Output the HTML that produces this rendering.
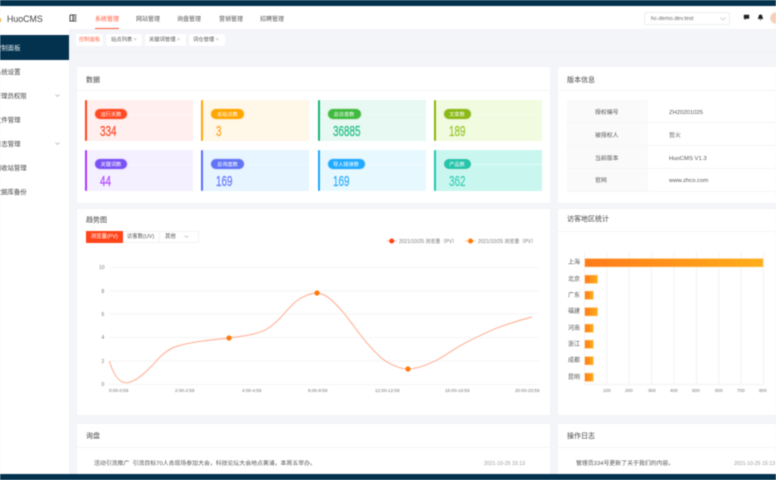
<!DOCTYPE html>
<html lang="zh">
<head>
<meta charset="utf-8">
<title>HuoCMS</title>
<style>
*{margin:0;padding:0;box-sizing:border-box}
html,body{width:776px;height:480px;overflow:hidden;background:#f4f5f9}
body{font-family:"Liberation Sans","Noto Sans CJK SC",sans-serif;position:relative}
#w{position:absolute;left:0;top:0;width:776px;height:480px;overflow:hidden;filter:blur(.4px)}
.a{position:absolute}
.t{position:absolute;white-space:nowrap;line-height:10px;height:10px;margin-top:1.5px}
.card{position:absolute;background:#fff;border-radius:2px}
.hr{position:absolute;height:1px;background:#f5f5f7}
.title{font-size:7px;color:#444}
.side{font-size:6.4px;color:#444;margin-top:2px}
.nav{font-size:6px;color:#555}
.tab{position:absolute;top:34px;height:12px;background:#fff;border-radius:2px;font-size:5.3px;line-height:13.5px;color:#555;white-space:nowrap;padding-left:6px}
.tile{position:absolute;width:108px;height:41px}
.tile i{position:absolute;left:0;top:0;width:2px;height:100%;border-radius:1px}
.tile u{position:absolute;left:10px;right:0;top:14px;height:1px;background:rgba(255,255,255,.45)}
.pill{position:absolute;top:8px;left:9px;height:11.5px;border-radius:6px;color:#fff;font-size:5.2px;line-height:12.5px;text-align:center;border:.5px solid rgba(255,255,255,.8);white-space:nowrap}
.num{position:absolute;left:15px;top:21.5px;font-size:15px;line-height:19px;transform:scaleX(.66);transform-origin:left center;white-space:nowrap;-webkit-text-stroke:.3px currentColor}
.cell{position:absolute;font-size:5.9px;color:#555;line-height:10px;white-space:nowrap;margin-top:1.5px}
.ax{font-size:4.6px;color:#777}
</style>
</head>
<body>
<div id="w">
  <!-- header -->
  <div class="a" style="left:0;top:5px;width:776px;height:24px;background:#fff"></div>
  <div class="a" style="left:0;top:0;width:776px;height:5.5px;background:#03324f"></div>
  <div class="a" style="left:0;top:18px;width:1.3px;height:3.5px;background:#f5a623"></div>
  <div class="t" style="left:7px;top:13px;font-size:8.8px;color:#444;margin-top:.5px">HuoCMS</div>
  <svg class="a" style="left:69px;top:14px" width="9" height="8" viewBox="0 0 9 8"><path d="M1 1H7.5M1 1V7H7.5M4 1V7M5 3H7.5M5 5H7.5" fill="none" stroke="#444" stroke-width="1"/></svg>
  <div class="t nav" style="left:95px;top:13px;color:#ff5a3c">系统管理</div>
  <div class="a" style="left:95px;top:28px;width:24px;height:1px;background:#ff5a3c"></div>
  <div class="t nav" style="left:136px;top:13px">网站管理</div>
  <div class="t nav" style="left:177px;top:13px">询盘管理</div>
  <div class="t nav" style="left:219px;top:13px">营销管理</div>
  <div class="t nav" style="left:260px;top:13px">招聘管理</div>
  <div class="a" style="left:644px;top:12px;width:86px;height:13px;border:1px solid #eceef2;border-radius:2px;background:#fff"></div>
  <div class="t" style="left:651px;top:13px;font-size:5.6px;color:#666;margin-top:.5px">hc-demo.dev.test</div>
  <svg class="a" style="left:720px;top:17px" width="6" height="4" viewBox="0 0 6 4"><path d="M.5 .5L3 3L5.5 .5" fill="none" stroke="#bbb" stroke-width=".6"/></svg>
  <svg class="a" style="left:743px;top:14px" width="7" height="7" viewBox="0 0 7 7"><path d="M.8 .8H6.2V4.8H3L1.8 6V4.8H.8Z" fill="#222"/></svg>
  <svg class="a" style="left:757px;top:14px" width="7" height="7" viewBox="0 0 7 7"><path d="M3.5 .5C5 .5 5.5 2 5.5 3.2L6.3 5H.7L1.5 3.2C1.5 2 2 .5 3.5 .5ZM2.7 5.6H4.3L3.5 6.6Z" fill="#222"/></svg>
  <div class="a" style="left:770px;top:12px;width:12px;height:12px;border-radius:50%;background:#f8cdb8;border:1px solid #f1dfd6"></div>

  <!-- sidebar -->
  <div class="a" style="left:0;top:29px;width:68.5px;height:446px;background:#fff"></div>
  <div class="a" style="left:0;top:35px;width:68.5px;height:25px;background:#03324f"></div>
  <div class="t side" style="left:-5px;top:41.5px;color:#e8eef2">控制面板</div>
  <div class="t side" style="left:-5px;top:65.5px">系统设置</div>
  <div class="t side" style="left:-5.3px;top:89.5px">管理员权限</div>
  <div class="t side" style="left:-5px;top:113.5px">文件管理</div>
  <div class="t side" style="left:-5px;top:137.5px">日志管理</div>
  <div class="t side" style="left:-5.3px;top:161.5px">回收站管理</div>
  <div class="t side" style="left:-5.3px;top:185.5px">数据库备份</div>
  <svg class="a" style="left:55px;top:94px" width="5" height="3" viewBox="0 0 5 3"><path d="M.5 .5L2.5 2.4L4.5 .5" fill="none" stroke="#aaa" stroke-width=".6"/></svg>
  <svg class="a" style="left:55px;top:142px" width="5" height="3" viewBox="0 0 5 3"><path d="M.5 .5L2.5 2.4L4.5 .5" fill="none" stroke="#aaa" stroke-width=".6"/></svg>

  <!-- tabs -->
  <div class="tab" style="left:76px;width:27px;padding-left:3px;color:#ff6a4d">控制面板</div>
  <div class="tab" style="left:106px;width:36px;padding-left:5px">站点列表 <span style="color:#aaa">×</span></div>
  <div class="tab" style="left:145px;width:41px;padding-left:4px">关键词管理 <span style="color:#aaa">×</span></div>
  <div class="tab" style="left:189px;width:36px;padding-left:4px">词仓管理 <span style="color:#aaa">×</span></div>
  <div class="hr" style="left:69px;top:52px;width:707px;background:#f0f1f5"></div>

  <!-- data card -->
  <div class="card" style="left:77px;top:67px;width:473px;height:136px"></div>
  <div class="t title" style="left:86px;top:74px">数据</div>
  <div class="hr" style="left:77px;top:90px;width:473px"></div>

  <div class="tile" style="left:85px;top:100px;background:#fff0ef"><i style="background:#ff4419"></i><u></u><div class="pill" style="width:34px;background:#ff4a24">运行天数</div><div class="num" style="color:#ff5230">334</div></div>
  <div class="tile" style="left:201px;top:100px;background:#fff7e8"><i style="background:#ffa30f"></i><u></u><div class="pill" style="width:35px;background:#ffa600">总站点数</div><div class="num" style="color:#ffa820">3</div></div>
  <div class="tile" style="left:317.5px;top:100px;background:#e8f8f2"><i style="background:#16b777"></i><u></u><div class="pill" style="width:35px;background:#3fb93f">总访患数</div><div class="num" style="color:#2cc08a">36885</div></div>
  <div class="tile" style="left:433.5px;top:100px;background:#f1fbe0"><i style="background:#8ab808"></i><u></u><div class="pill" style="width:29px;background:#8ab916">文章数</div><div class="num" style="color:#9cc832">189</div></div>

  <div class="tile" style="left:85px;top:150px;background:#f5f0ff"><i style="background:#a838ff"></i><u></u><div class="pill" style="width:34px;background:#7a52f4">关键词数</div><div class="num" style="color:#b04dff">44</div></div>
  <div class="tile" style="left:201px;top:150px;background:#e6f5ff"><i style="background:#5b6cff"></i><u></u><div class="pill" style="width:35px;background:#6174f5">总询盘数</div><div class="num" style="color:#6a78ff">169</div></div>
  <div class="tile" style="left:317.5px;top:150px;background:#e8f8ff"><i style="background:#1aa7ff"></i><u></u><div class="pill" style="width:39px;background:#22aaff">导入链接数</div><div class="num" style="color:#30b0ff">169</div></div>
  <div class="tile" style="left:433.5px;top:150px;background:#c9f7f0"><i style="background:#20c7b0"></i><u></u><div class="pill" style="width:29px;background:#26c4ab">产品数</div><div class="num" style="color:#40d0b8">362</div></div>

  <!-- version card -->
  <div class="card" style="left:558px;top:67px;width:230px;height:136px"></div>
  <div class="t title" style="left:567px;top:74px">版本信息</div>
  <div class="hr" style="left:558px;top:90px;width:218px"></div>
  <div class="a" style="left:567px;top:100px;width:81px;height:91px;background:#fafafa"></div>
  <div class="hr" style="left:567px;top:122px;width:209px"></div>
  <div class="hr" style="left:567px;top:145px;width:209px"></div>
  <div class="hr" style="left:567px;top:168px;width:209px"></div>
  <div class="hr" style="left:567px;top:191px;width:209px"></div>
  <div class="cell" style="left:595px;top:106px">授权编号</div>
  <div class="cell" style="left:669px;top:106px">ZH20201025</div>
  <div class="cell" style="left:595px;top:129px">被授权人</div>
  <div class="cell" style="left:669px;top:129px">哲火</div>
  <div class="cell" style="left:595px;top:152px">当前版本</div>
  <div class="cell" style="left:669px;top:152px">HuoCMS V1.3</div>
  <div class="cell" style="left:595px;top:174px">官网</div>
  <div class="cell" style="left:669px;top:174px">www.zhco.com</div>

  <!-- trend card -->
  <div class="card" style="left:77px;top:209px;width:473px;height:206px"></div>
  <div class="t title" style="left:86px;top:214.5px">趋势图</div>
  <div class="a" style="left:86px;top:231px;width:113px;height:12px;border:1px solid #f2f3f5"></div>
  <div class="a" style="left:86px;top:231px;width:36.5px;height:12px;background:#ff4419;color:#fff;font-size:5.4px;line-height:13px;text-align:center;white-space:nowrap">浏览量(PV)</div>
  <div class="a" style="left:122.5px;top:231px;width:37px;height:12px;color:#555;font-size:5.4px;line-height:13px;text-align:center;border-right:1px solid #f2f3f5;white-space:nowrap">访客数(UV)</div>
  <div class="a" style="left:165px;top:231px;height:12px;color:#555;font-size:5.4px;line-height:13px;white-space:nowrap">其他</div>
  <svg class="a" style="left:184px;top:235px" width="5" height="3" viewBox="0 0 5 3"><path d="M.5 .5L2.5 2.4L4.5 .5" fill="none" stroke="#bbb" stroke-width=".6"/></svg>

  <svg class="a" style="left:77px;top:209px" width="473" height="206" viewBox="77 209 473 206">
    <g stroke="#f5f5f7" stroke-width="1">
      <path d="M109 267.5H539M109 291H539M109 314H539M109 337.5H539M109 361H539M109 384.5H539"/>
    </g>
    <path d="M109.3 361C113 373 118 382.7 126 382.7C137 382.7 150 368 159 358C166 351 171 348 176 346.5C192 341.5 212 340 229 338C243 336 253 335 263 331C272 327 278 320 283 315C290 307 296 300 303 297C308 294.5 312 293 317 293C326 293 335 303 343 312C352 323 359 334 367 343C373 350 380 358 387 362C394 366 401 369 408 369C417 369 428 364.5 437 360C448 354 456 347.5 467 342C477 337 487 332 497 328C509 323.5 520 320 532 317" fill="none" stroke="#ffb79e" stroke-width="1.2"/>
    <circle cx="229" cy="338" r="2.6" fill="#ff7a0a"/>
    <circle cx="317" cy="293" r="2.6" fill="#ff7a0a"/>
    <circle cx="408" cy="369" r="2.6" fill="#ff7a0a"/>
    <path d="M387 241H396.5" stroke="#ff8a66" stroke-width=".7"/><circle cx="391.7" cy="241" r="2.5" fill="#ff4419"/>
    <path d="M465 241H475.5" stroke="#ffab66" stroke-width=".7"/><circle cx="470.5" cy="241" r="2.5" fill="#ff7a0a"/>
  </svg>
  <div class="t ax" style="left:399px;top:235px;font-size:5px">2021/10/25 浏览量（PV）</div>
  <div class="t ax" style="left:478px;top:235px;font-size:5px">2021/10/25 浏览量（PV）</div>
  <div class="t ax" style="left:99px;top:261px;font-size:5px">10</div>
  <div class="t ax" style="left:101.5px;top:285px;font-size:5px">8</div>
  <div class="t ax" style="left:101.5px;top:308px;font-size:5px">6</div>
  <div class="t ax" style="left:101.5px;top:331px;font-size:5px">4</div>
  <div class="t ax" style="left:101.5px;top:355px;font-size:5px">2</div>
  <div class="t ax" style="left:101.5px;top:378px;font-size:5px">0</div>
  <div class="t ax" style="left:109px;top:384px">0:00-0:59</div>
  <div class="t ax" style="left:175px;top:384px">2:00-2:59</div>
  <div class="t ax" style="left:242px;top:384px">4:00-4:59</div>
  <div class="t ax" style="left:308px;top:384px">8:00-8:59</div>
  <div class="t ax" style="left:375px;top:384px">12:00-12:59</div>
  <div class="t ax" style="left:445px;top:384px">16:00-16:59</div>
  <div class="t ax" style="left:515px;top:384px">20:00-20:59</div>

  <!-- region card -->
  <div class="card" style="left:558px;top:209px;width:230px;height:206px"></div>
  <div class="t title" style="left:567px;top:213.5px">访客地区统计</div>
  <div class="hr" style="left:558px;top:231px;width:218px"></div>
  <svg class="a" style="left:558px;top:240px" width="218" height="150" viewBox="558 240 218 150">
    <defs>
      <linearGradient id="g"><stop offset="0" stop-color="#ff7a1a"/><stop offset="1" stop-color="#ffae1a"/></linearGradient>
    </defs>
    <path d="M584.5 252V384.5H763M606.8 252V384.5M629.2 252V384.5M651.6 252V384.5M674 252V384.5M696.4 252V384.5M718.8 252V384.5M741.2 252V384.5M763.6 252V384.5" fill="none" stroke="#f3f3f6" stroke-width="1"/>
    <g fill="url(#g)" stroke="#ffe3b0" stroke-width=".5">
      <rect x="584.7" y="258.5" width="178.5" height="8.5"/>
      <rect x="584.7" y="275" width="13" height="8.5"/>
      <rect x="584.7" y="291" width="8.8" height="8.5"/>
      <rect x="584.7" y="307.5" width="13" height="8.5"/>
      <rect x="584.7" y="324" width="8.8" height="8.5"/>
      <rect x="584.7" y="340" width="8.8" height="8.5"/>
      <rect x="584.7" y="356.5" width="8.8" height="8.5"/>
      <rect x="584.7" y="373" width="8.8" height="8.5"/>
    </g>
  </svg>
  <div class="t" style="left:568px;top:256.5px;font-size:6px;color:#555">上海</div>
  <div class="t" style="left:568px;top:273px;font-size:6px;color:#555">北京</div>
  <div class="t" style="left:568px;top:289px;font-size:6px;color:#555">广东</div>
  <div class="t" style="left:568px;top:305.5px;font-size:6px;color:#555">福建</div>
  <div class="t" style="left:568px;top:322px;font-size:6px;color:#555">河南</div>
  <div class="t" style="left:568px;top:338px;font-size:6px;color:#555">浙江</div>
  <div class="t" style="left:568px;top:354.5px;font-size:6px;color:#555">成都</div>
  <div class="t" style="left:568px;top:371px;font-size:6px;color:#555">昆明</div>
  <div class="t ax" style="left:603px;top:384px">100</div>
  <div class="t ax" style="left:625px;top:384px">200</div>
  <div class="t ax" style="left:648px;top:384px">300</div>
  <div class="t ax" style="left:670px;top:384px">400</div>
  <div class="t ax" style="left:692px;top:384px">500</div>
  <div class="t ax" style="left:715px;top:384px">600</div>
  <div class="t ax" style="left:737px;top:384px">700</div>
  <div class="t ax" style="left:759px;top:384px">800</div>

  <!-- bottom cards -->
  <div class="card" style="left:77px;top:424px;width:473px;height:60px"></div>
  <div class="t title" style="left:86px;top:430px">询盘</div>
  <div class="hr" style="left:77px;top:447px;width:473px"></div>
  <div class="t" style="left:94px;top:457.5px;font-size:5.9px;color:#555">活动引流推广&nbsp;&nbsp;引流目标70人去现场参加大会，科技论坛大会地点黄浦，本周五举办。</div>
  <div class="t" style="left:484px;top:457.5px;font-size:5.2px;color:#999">2021-10-25 15:13</div>

  <div class="card" style="left:558px;top:424px;width:230px;height:60px"></div>
  <div class="t title" style="left:567px;top:430px">操作日志</div>
  <div class="hr" style="left:558px;top:447px;width:218px"></div>
  <div class="t" style="left:576px;top:457.5px;font-size:5.9px;color:#555">管理员334号更新了关于我们的内容。</div>
  <div class="t" style="left:734px;top:457.5px;font-size:5.2px;color:#999">2021-10-25 15:13</div>

  <div class="a" style="left:0;top:474px;width:776px;height:6px;background:#03324f"></div>
</div>
</body>
</html>
